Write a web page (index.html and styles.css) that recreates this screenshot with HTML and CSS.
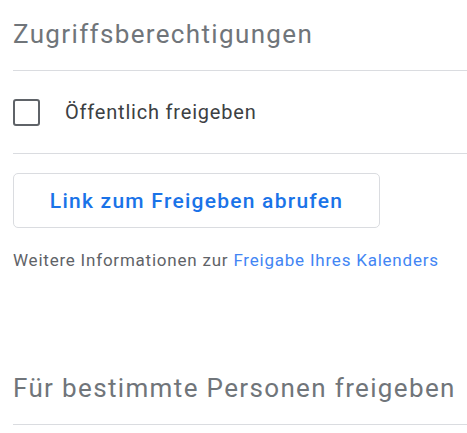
FILE: index.html
```html
<!DOCTYPE html>
<html lang="de">
<head>
<meta charset="utf-8">
<link rel="stylesheet" href="styles.css">
</head>
<body>
<div class="panel">
  <h2 class="section-title first">Zugriffsberechtigungen</h2>
  <div class="divider"></div>
  <label class="check-row">
    <span class="checkbox"></span>
    <span class="check-label">Öffentlich freigeben</span>
  </label>
  <div class="divider"></div>
  <button class="link-btn">Link zum Freigeben abrufen</button>
  <p class="info">Weitere Informationen zur <a class="info-link">Freigabe Ihres Kalenders</a></p>
  <h2 class="section-title second">Für bestimmte Personen freigeben</h2>
  <div class="divider"></div>
</div>
</body>
</html>
```

FILE: styles.css
```css
html, body {
  margin: 0;
  padding: 0;
  background: #ffffff;
}
body {
  font-family: Roboto, "Noto Sans", Arial, sans-serif;
}
.panel {
  padding-left: 13px;
  display: flex;
  flex-direction: column;
  align-items: flex-start;
}
.section-title {
  margin: 0;
  font-size: 26px;
  line-height: 32px;
  font-weight: 400;
  letter-spacing: 1.35px;
  color: #70757a;
}
.section-title.first {
  margin-top: 18px;
  margin-bottom: 20px;
}
.section-title.second {
  margin-top: 102px;
  margin-bottom: 20px;
}
.divider {
  align-self: stretch;
  height: 1px;
  background: #dadce0;
}
.check-row {
  align-self: stretch;
  height: 82px;
  display: flex;
  align-items: center;
}
.checkbox {
  width: 23px;
  height: 23px;
  border: 2px solid #5f6368;
  border-radius: 3px;
  margin-right: 25px;
  flex: none;
}
.check-label {
  font-size: 20px;
  letter-spacing: 0.8px;
  color: #3c4043;
}
.link-btn {
  margin-top: 19px;
  width: 367px;
  height: 55px;
  background: #fff;
  border: 1px solid #dadce0;
  border-radius: 5px;
  font-family: Roboto, "Noto Sans", Arial, sans-serif;
  font-size: 21px;
  font-weight: 500;
  letter-spacing: 1.25px;
  color: #1a73e8;
  padding: 0;
}
.info {
  margin: 22px 0 0;
  font-size: 17px;
  line-height: 20px;
  letter-spacing: 0.78px;
  color: #5f6368;
}
.info-link {
  color: #4285f4;
}
```
